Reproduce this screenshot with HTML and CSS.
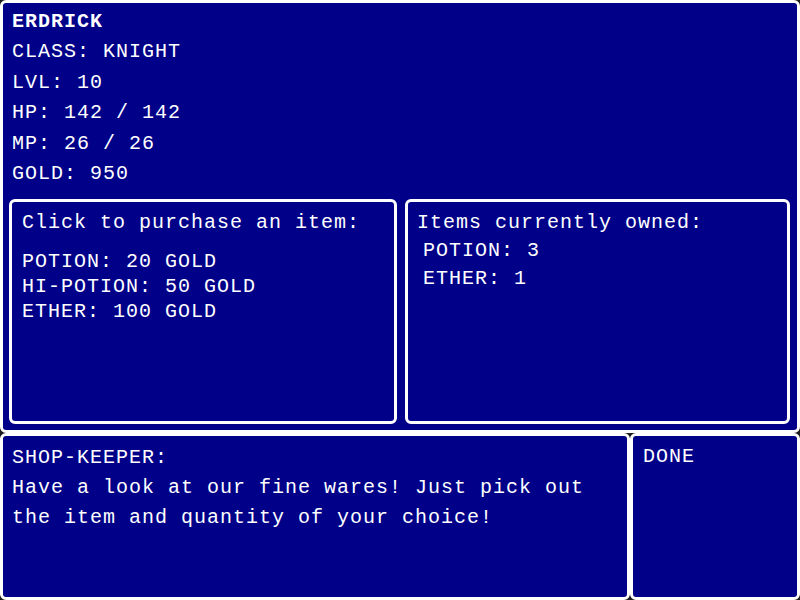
FILE: index.html
```html
<!DOCTYPE html>
<html>
<head>
<meta charset="utf-8">
<link rel="stylesheet" href="styles.css">
</head>
<body>
<div class="top panel">
  <div class="stats">
    <div class="name">ERDRICK</div>
    <div>CLASS: KNIGHT</div>
    <div>LVL: 10</div>
    <div>HP: 142 / 142</div>
    <div>MP: 26 / 26</div>
    <div>GOLD: 950</div>
  </div>
  <div class="row">
    <div class="box shop">
      <div class="heading">Click to purchase an item:</div>
      <div class="items">
        <div>POTION: 20 GOLD</div>
        <div>HI-POTION: 50 GOLD</div>
        <div>ETHER: 100 GOLD</div>
      </div>
    </div>
    <div class="box owned">
      <div class="heading">Items currently owned:</div>
      <div class="items">
        <div>POTION: 3</div>
        <div>ETHER: 1</div>
      </div>
    </div>
  </div>
</div>
<div class="bottom">
  <div class="panel dialog">
    <div>SHOP-KEEPER:</div>
    <div>Have a look at our fine wares! Just pick out the item and quantity of your choice!</div>
  </div>
  <div class="panel done">
    <div>DONE</div>
  </div>
</div>
</body>
</html>
```
FILE: styles.css
```css
html, body {
  margin: 0;
  padding: 0;
  background: #1c1c1c;
}
body {
  width: 800px;
  height: 600px;
  overflow: hidden;
  font-family: "Liberation Mono", "Courier New", monospace;
  font-size: 20px;
  letter-spacing: 1px;
  color: #fff;
}
.panel {
  box-sizing: border-box;
  background: #000088;
  border: 3px solid #fff;
  border-radius: 6px;
}
.top {
  height: 433px;
  padding: 4px 7px 0 6px;
}
.stats {
  padding-left: 3px;
  line-height: 30.4px;
}
.name {
  font-weight: bold;
}
.row {
  display: flex;
  gap: 8px;
  margin-top: 10px;
}
.box {
  box-sizing: border-box;
  height: 225px;
  border: 3px solid #fff;
  border-radius: 6px;
  padding: 8px 10px 0 10px;
}
.shop {
  width: 388px;
}
.owned {
  width: 385px;
  padding-left: 9px;
}
.heading {
  line-height: 25px;
}
.shop .items {
  margin-top: 14px;
  line-height: 25px;
}
.owned .items {
  margin-top: 1.5px;
  line-height: 28px;
  padding-left: 6px;
}
.bottom {
  display: flex;
  height: 167px;
}
.dialog {
  width: 630px;
  padding: 7px 9px;
  line-height: 30px;
}
.done {
  width: 170px;
  padding: 6px 10px;
  line-height: 30px;
}
```
